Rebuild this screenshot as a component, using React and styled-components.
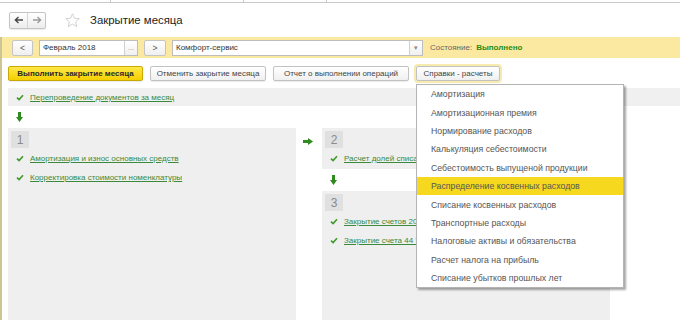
import styled, { createGlobalStyle } from "styled-components";

const Global = createGlobalStyle`
  html, body {
    margin: 0;
    padding: 0;
    background: #fff;
  }
  body {
    font-family: "Liberation Sans", Arial, sans-serif;
    color: #333;
  }
`;

const Screen = styled.div`
  width: 680px;
  height: 320px;
  overflow: hidden;
  position: relative;
  background: #fff;
`;

const TabStrip = styled.div`
  display: flex;
  height: 2px;
  border-bottom: 1px solid #c8c8c8;
`;
const TabEdge = styled.div`
  width: ${(p) => p.$w}px;
  border-right: 1px solid #c8c8c8;
`;

const Header = styled.div`
  display: flex;
  align-items: center;
  height: 34px;
  padding-left: 9px;
`;
const NavGroup = styled.div`
  display: flex;
  border: 1px solid #c4c4c4;
  border-radius: 2px;
  background: linear-gradient(#fff, #ececec);
  box-shadow: 0 1px 1px rgba(0, 0, 0, 0.08);
`;
const NavButton = styled.div`
  width: 17px;
  height: 15px;
  display: flex;
  align-items: center;
  justify-content: center;
  & + & {
    border-left: 1px solid #d4d4d4;
  }
`;
const Title = styled.div`
  font-size: 11.4px;
  color: #222;
  margin-left: 9px;
`;

const Body = styled.div`
  border-left: 2px solid #cdc592;
  padding-left: 6px;
  height: 290px;
`;

const FilterBand = styled.div`
  display: flex;
  align-items: center;
  height: 21px;
  background: #fbe9a2;
  margin-left: -6px;
  padding-left: 10px;
  gap: 6px;
  font-size: 8px;
`;
const SmallButton = styled.div`
  width: ${(p) => p.$w}px;
  height: 14px;
  border: 1px solid #c4c4c4;
  border-radius: 2px;
  background: linear-gradient(#fff, #efefef);
  display: flex;
  align-items: center;
  justify-content: center;
  color: #555;
  font-size: 8.5px;
`;
const Field = styled.div`
  display: flex;
  width: ${(p) => p.$w}px;
  height: 14px;
  border: 1px solid #bdbdbd;
  background: #fff;
  margin-right: ${(p) => p.$mr || 0}px;
`;
const FieldText = styled.div`
  flex: 1;
  padding-left: 3px;
  display: flex;
  align-items: center;
  color: #333;
`;
const FieldButton = styled.div`
  width: 12px;
  border-left: 1px solid #cfcfcf;
  background: linear-gradient(#fff, #f0f0f0);
  display: flex;
  align-items: center;
  justify-content: center;
  color: #888;
  font-size: 7px;
`;
const StatusLabel = styled.span`
  color: #666;
`;
const StatusValue = styled.span`
  color: #2b8a12;
  font-weight: bold;
  margin-left: -2px;
`;

const ButtonRow = styled.div`
  display: flex;
  align-items: center;
  gap: 7px;
  margin-top: 7px;
  height: 17px;
`;
const ActionButton = styled.div`
  width: ${(p) => p.$w}px;
  height: 15px;
  display: flex;
  align-items: center;
  justify-content: center;
  border: 1px solid ${(p) => (p.$primary ? "#c9a900" : "#c2c2c2")};
  border-radius: 2px;
  background: ${(p) =>
    p.$primary
      ? "linear-gradient(#ffe94a, #f5cf00)"
      : "linear-gradient(#fff, #f0f0f0)"};
  box-shadow: ${(p) =>
    p.$active ? "0 0 0 2px #f6eaae" : "0 1px 1px rgba(0,0,0,0.08)"};
  color: ${(p) => (p.$primary ? "#2a2a2a" : "#444")};
  font-size: 8px;
  font-weight: ${(p) => (p.$primary ? "bold" : "normal")};
  white-space: nowrap;
  box-sizing: border-box;
`;
const MenuAnchor = styled.div`
  position: relative;
`;

const StatusStrip = styled.div`
  display: flex;
  align-items: center;
  height: 18px;
  margin-top: 6px;
  background: #f0f0f0;
  padding-left: 8px;
`;
const ArrowRow = styled.div`
  height: 22px;
  display: flex;
  align-items: center;
  padding-left: 8px;
`;

const Steps = styled.div`
  display: flex;
  align-items: flex-start;
`;
const Panel = styled.div`
  width: 288px;
  min-height: ${(p) => p.$h}px;
  background: #efefef;
  padding: 3px 3px 1px;
  box-sizing: border-box;
`;
const NumBox = styled.div`
  width: 18px;
  height: 17px;
  background: #e0e0e0;
  color: #8a8a8a;
  font-size: 12px;
  display: flex;
  align-items: center;
  justify-content: center;
  margin-bottom: 1px;
`;
const Item = styled.div`
  display: flex;
  align-items: center;
  height: 19px;
  padding-left: 5px;
  gap: 6px;
  white-space: nowrap;
  overflow: hidden;
`;
const Link = styled.span`
  color: #3b8a3b;
  text-decoration: underline;
  font-size: 8px;
`;
const Connector = styled.div`
  width: 26px;
  display: flex;
  justify-content: center;
  padding-top: 10px;
  padding-right: 2px;
  box-sizing: border-box;
`;
const Column = styled.div`
  display: flex;
  flex-direction: column;
`;
const DownGap = styled.div`
  height: 22px;
  display: flex;
  align-items: center;
  padding-left: 8px;
`;

const Menu = styled.div`
  position: absolute;
  top: 18px;
  left: 0;
  width: 206px;
  background: #fff;
  border: 1px solid #b4b4b4;
  box-shadow: 2px 2px 2px rgba(0, 0, 0, 0.35);
  z-index: 5;
`;
const MenuItem = styled.div`
  height: 18.4px;
  display: flex;
  align-items: center;
  padding-left: 14px;
  font-size: 8.75px;
  color: #555;
  white-space: nowrap;
  background: ${(p) => (p.$hover ? "#f6d81f" : "transparent")};
`;

const Check = () => (
  <svg width="8" height="7" viewBox="0 0 8 7">
    <path d="M1 3.6 L3.1 5.6 L7 1.2" fill="none" stroke="#3f9a2a" strokeWidth="1.6" />
  </svg>
);
const DownArrow = () => (
  <svg width="7" height="10" viewBox="0 0 7 10">
    <path d="M2 0 H5 V5 H7 L3.5 10 L0 5 H2 Z" fill="#2f8a1f" />
  </svg>
);
const RightArrow = () => (
  <svg width="10" height="7" viewBox="0 0 10 7">
    <path d="M0 2 V5 H5 V7 L10 3.5 L5 0 V2 Z" fill="#2f8a1f" />
  </svg>
);
const NavArrow = ({ dir, color }) => (
  <svg width="10" height="8" viewBox="0 0 10 8">
    {dir === "left" ? (
      <path d="M9 4 H1.5 M4.5 1 L1.3 4 L4.5 7" fill="none" stroke={color} strokeWidth="1.3" />
    ) : (
      <path d="M1 4 H8.5 M5.5 1 L8.7 4 L5.5 7" fill="none" stroke={color} strokeWidth="1.3" />
    )}
  </svg>
);
const Star = () => (
  <svg width="17" height="17" viewBox="0 0 24 24" style={{ marginLeft: 18 }}>
    <path
      d="M12 2.5 L14.8 8.8 L21.6 9.4 L16.4 13.9 L18 20.6 L12 17 L6 20.6 L7.6 13.9 L2.4 9.4 L9.2 8.8 Z"
      fill="none"
      stroke="#c9c9c9"
      strokeWidth="1.2"
    />
  </svg>
);

const menuItems = [
  "Амортизация",
  "Амортизационная премия",
  "Нормирование расходов",
  "Калькуляция себестоимости",
  "Себестоимость выпущеной продукции",
  "Распределение косвенных расходов",
  "Списание косвенных расходов",
  "Транспортные расходы",
  "Налоговые активы и обязательства",
  "Расчет налога на прибыль",
  "Списание убытков прошлых лет",
];

export default function App() {
  return (
    <Screen>
      <Global />
      <TabStrip>
        <TabEdge $w={110} />
        <TabEdge $w={132} />
        <TabEdge $w={82} />
      </TabStrip>
      <Header>
        <NavGroup>
          <NavButton>
            <NavArrow dir="left" color="#444" />
          </NavButton>
          <NavButton>
            <NavArrow dir="right" color="#999" />
          </NavButton>
        </NavGroup>
        <Star />
        <Title>Закрытие месяца</Title>
      </Header>
      <Body>
        <FilterBand>
          <SmallButton $w={19}>&lt;</SmallButton>
          <Field $w={97}>
            <FieldText>Февраль 2018</FieldText>
            <FieldButton>...</FieldButton>
          </Field>
          <SmallButton $w={20}>&gt;</SmallButton>
          <Field $w={249} $mr={1}>
            <FieldText>Комфорт-сервис</FieldText>
            <FieldButton>▾</FieldButton>
          </Field>
          <StatusLabel>Состояние:</StatusLabel>
          <StatusValue>Выполнено</StatusValue>
        </FilterBand>

        <ButtonRow>
          <ActionButton $primary $w={135}>Выполнить закрытие месяца</ActionButton>
          <ActionButton $w={116}>Отменить закрытие месяца</ActionButton>
          <ActionButton $w={136}>Отчет о выполнении операций</ActionButton>
          <MenuAnchor>
            <ActionButton $active $w={84}>Справки - расчеты</ActionButton>
            <Menu>
              {menuItems.map((m, i) => (
                <MenuItem key={m} $hover={i === 5}>
                  {m}
                </MenuItem>
              ))}
            </Menu>
          </MenuAnchor>
        </ButtonRow>

        <StatusStrip>
          <Check />
          <Link style={{ marginLeft: 6 }}>Перепроведение документов за месяц</Link>
        </StatusStrip>
        <ArrowRow>
          <DownArrow />
        </ArrowRow>

        <Steps>
          <Panel $h={200}>
            <NumBox>1</NumBox>
            <Item>
              <Check />
              <Link>Амортизация и износ основных средств</Link>
            </Item>
            <Item>
              <Check />
              <Link>Корректировка стоимости номенклатуры</Link>
            </Item>
          </Panel>
          <Connector>
            <RightArrow />
          </Connector>
          <Column>
            <Panel $h={40}>
              <NumBox>2</NumBox>
              <Item>
                <Check />
                <Link>Расчет долей списания</Link>
              </Item>
            </Panel>
            <DownGap>
              <DownArrow />
            </DownGap>
            <Panel $h={140}>
              <NumBox>3</NumBox>
              <Item>
                <Check />
                <Link>Закрытие счетов 20, 23</Link>
              </Item>
              <Item>
                <Check />
                <Link>Закрытие счета 44 "</Link>
              </Item>
            </Panel>
          </Column>
        </Steps>
      </Body>
    </Screen>
  );
}
